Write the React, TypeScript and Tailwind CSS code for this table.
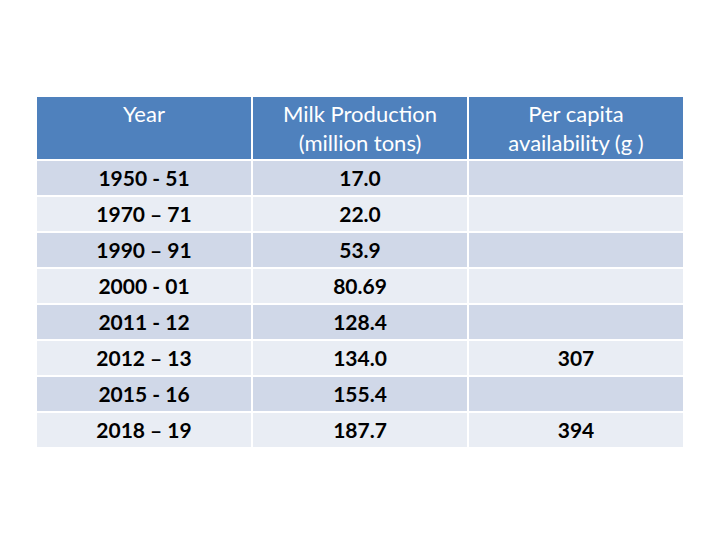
const rows = [
  { year: "1950 - 51", milk: "17.0", pc: "" },
  { year: "1970 – 71", milk: "22.0", pc: "" },
  { year: "1990 – 91", milk: "53.9", pc: "" },
  { year: "2000 - 01", milk: "80.69", pc: "" },
  { year: "2011 - 12", milk: "128.4", pc: "" },
  { year: "2012 – 13", milk: "134.0", pc: "307" },
  { year: "2015 - 16", milk: "155.4", pc: "" },
  { year: "2018 – 19", milk: "187.7", pc: "394" },
];

export default function App() {
  return (
    <div
      className="w-[720px] h-[540px] bg-white pt-[97px] pl-[37px]"
      style={{ fontFamily: "Lato, 'Open Sans', sans-serif" }}
    >
      <div className="grid grid-cols-[214px_214px_214px] gap-[2px] w-[646px]">
        {/* header */}
        <div className="h-[62px] bg-[#4f81bd] text-white text-[22px] leading-[29px] text-center pt-[2px]">
          Year
        </div>
        <div className="h-[62px] bg-[#4f81bd] text-white text-[22px] leading-[29px] text-center pt-[2px]">
          Milk Production
          <br />
          (million tons)
        </div>
        <div className="h-[62px] bg-[#4f81bd] text-white text-[22px] leading-[29px] text-center pt-[2px]">
          Per capita
          <br />
          availability (g )
        </div>

        {rows.map((r, i) => {
          const bg = i % 2 === 0 ? "bg-[#d0d8e8]" : "bg-[#e9edf4]";
          return [r.year, r.milk, r.pc].map((v, j) => (
            <div
              key={i + "-" + j}
              className={`h-[34px] ${bg} flex items-center justify-center text-[21px] font-bold text-black`}
            >
              {v}
            </div>
          ));
        })}
      </div>
    </div>
  );
}
